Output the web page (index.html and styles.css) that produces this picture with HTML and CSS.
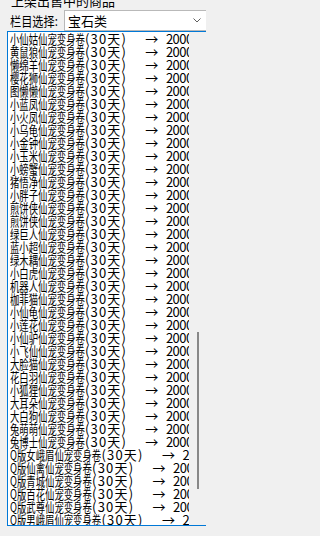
FILE: index.html
```html
<!DOCTYPE html>
<html lang="zh-CN">
<head>
<meta charset="utf-8">
<title>上架出售中的商品</title>
<link rel="stylesheet" href="styles.css">
</head>
<body>
<div class="page">
  <div class="title">上架出售中的商品</div>
  <div class="bar">
    <div class="label"><span class="label-text">栏目选择:</span></div>
    <div class="combo">
      <span class="combo-text">宝石类</span>
      <svg class="chev" width="8" height="5" viewBox="0 0 8 5"><path d="M0.5 0.5 L4 4 L7.5 0.5" fill="none" stroke="#606060" stroke-width="1"/></svg>
    </div>
  </div>
  <div class="list">
    <div class="items">
      <div class="row"><span>小仙姑仙宠变身卷</span><span class="sfx"><span class="dur">(30天)</span><span class="arw">→</span><span class="pts">2000</span></span></div>
      <div class="row"><span>黄鼠狼仙宠变身卷</span><span class="sfx"><span class="dur">(30天)</span><span class="arw">→</span><span class="pts">2000</span></span></div>
      <div class="row"><span>懒绵羊仙宠变身卷</span><span class="sfx"><span class="dur">(30天)</span><span class="arw">→</span><span class="pts">2000</span></span></div>
      <div class="row"><span>樱花狮仙宠变身卷</span><span class="sfx"><span class="dur">(30天)</span><span class="arw">→</span><span class="pts">2000</span></span></div>
      <div class="row"><span>图懒懒仙宠变身卷</span><span class="sfx"><span class="dur">(30天)</span><span class="arw">→</span><span class="pts">2000</span></span></div>
      <div class="row"><span>小蓝凤仙宠变身卷</span><span class="sfx"><span class="dur">(30天)</span><span class="arw">→</span><span class="pts">2000</span></span></div>
      <div class="row"><span>小火凤仙宠变身卷</span><span class="sfx"><span class="dur">(30天)</span><span class="arw">→</span><span class="pts">2000</span></span></div>
      <div class="row"><span>小乌龟仙宠变身卷</span><span class="sfx"><span class="dur">(30天)</span><span class="arw">→</span><span class="pts">2000</span></span></div>
      <div class="row"><span>小金钟仙宠变身卷</span><span class="sfx"><span class="dur">(30天)</span><span class="arw">→</span><span class="pts">2000</span></span></div>
      <div class="row"><span>小玉米仙宠变身卷</span><span class="sfx"><span class="dur">(30天)</span><span class="arw">→</span><span class="pts">2000</span></span></div>
      <div class="row"><span>小螃蟹仙宠变身卷</span><span class="sfx"><span class="dur">(30天)</span><span class="arw">→</span><span class="pts">2000</span></span></div>
      <div class="row"><span>猪悟净仙宠变身卷</span><span class="sfx"><span class="dur">(30天)</span><span class="arw">→</span><span class="pts">2000</span></span></div>
      <div class="row"><span>小胖子仙宠变身卷</span><span class="sfx"><span class="dur">(30天)</span><span class="arw">→</span><span class="pts">2000</span></span></div>
      <div class="row"><span>煎饼侠仙宠变身卷</span><span class="sfx"><span class="dur">(30天)</span><span class="arw">→</span><span class="pts">2000</span></span></div>
      <div class="row"><span>煎饼侠仙宠变身卷</span><span class="sfx"><span class="dur">(30天)</span><span class="arw">→</span><span class="pts">2000</span></span></div>
      <div class="row"><span>绿巨人仙宠变身卷</span><span class="sfx"><span class="dur">(30天)</span><span class="arw">→</span><span class="pts">2000</span></span></div>
      <div class="row"><span>蓝小超仙宠变身卷</span><span class="sfx"><span class="dur">(30天)</span><span class="arw">→</span><span class="pts">2000</span></span></div>
      <div class="row"><span>绿木耦仙宠变身卷</span><span class="sfx"><span class="dur">(30天)</span><span class="arw">→</span><span class="pts">2000</span></span></div>
      <div class="row"><span>小白虎仙宠变身卷</span><span class="sfx"><span class="dur">(30天)</span><span class="arw">→</span><span class="pts">2000</span></span></div>
      <div class="row"><span>机器人仙宠变身卷</span><span class="sfx"><span class="dur">(30天)</span><span class="arw">→</span><span class="pts">2000</span></span></div>
      <div class="row"><span>枷菲猫仙宠变身卷</span><span class="sfx"><span class="dur">(30天)</span><span class="arw">→</span><span class="pts">2000</span></span></div>
      <div class="row"><span>小仙龟仙宠变身卷</span><span class="sfx"><span class="dur">(30天)</span><span class="arw">→</span><span class="pts">2000</span></span></div>
      <div class="row"><span>小莲花仙宠变身卷</span><span class="sfx"><span class="dur">(30天)</span><span class="arw">→</span><span class="pts">2000</span></span></div>
      <div class="row"><span>小仙驴仙宠变身卷</span><span class="sfx"><span class="dur">(30天)</span><span class="arw">→</span><span class="pts">2000</span></span></div>
      <div class="row"><span>小飞仙仙宠变身卷</span><span class="sfx"><span class="dur">(30天)</span><span class="arw">→</span><span class="pts">2000</span></span></div>
      <div class="row"><span>大脸猫仙宠变身卷</span><span class="sfx"><span class="dur">(30天)</span><span class="arw">→</span><span class="pts">2000</span></span></div>
      <div class="row"><span>花白羽仙宠变身卷</span><span class="sfx"><span class="dur">(30天)</span><span class="arw">→</span><span class="pts">2000</span></span></div>
      <div class="row"><span>小狐狸仙宠变身卷</span><span class="sfx"><span class="dur">(30天)</span><span class="arw">→</span><span class="pts">2000</span></span></div>
      <div class="row"><span>大耳朵仙宠变身卷</span><span class="sfx"><span class="dur">(30天)</span><span class="arw">→</span><span class="pts">2000</span></span></div>
      <div class="row"><span>大白狗仙宠变身卷</span><span class="sfx"><span class="dur">(30天)</span><span class="arw">→</span><span class="pts">2000</span></span></div>
      <div class="row"><span>兔萌萌仙宠变身卷</span><span class="sfx"><span class="dur">(30天)</span><span class="arw">→</span><span class="pts">2000</span></span></div>
      <div class="row"><span>兔博士仙宠变身卷</span><span class="sfx"><span class="dur">(30天)</span><span class="arw">→</span><span class="pts">2000</span></span></div>
      <div class="row"><span>Q版女峨眉仙宠变身卷</span><span class="sfx"><span class="dur">(30天)</span><span class="arw">→</span><span class="pts">2000</span></span></div>
      <div class="row"><span>Q版仙禽仙宠变身卷</span><span class="sfx"><span class="dur">(30天)</span><span class="arw">→</span><span class="pts">2000</span></span></div>
      <div class="row"><span>Q版青城仙宠变身卷</span><span class="sfx"><span class="dur">(30天)</span><span class="arw">→</span><span class="pts">2000</span></span></div>
      <div class="row"><span>Q版百花仙宠变身卷</span><span class="sfx"><span class="dur">(30天)</span><span class="arw">→</span><span class="pts">2000</span></span></div>
      <div class="row"><span>Q版武尊仙宠变身卷</span><span class="sfx"><span class="dur">(30天)</span><span class="arw">→</span><span class="pts">2000</span></span></div>
      <div class="row"><span>Q版男峨眉仙宠变身卷</span><span class="sfx"><span class="dur">(30天)</span><span class="arw">→</span><span class="pts">2000</span></span></div>
    </div>
    <div class="sb"><div class="thumb"></div></div>
  </div>
</div>
</body>
</html>
```

FILE: styles.css
```css
html, body {
  margin: 0;
  padding: 0;
  background: #f0f0f0;
  overflow: hidden;
}
body {
  font-family: "Noto Sans CJK SC", "Noto Sans", sans-serif;
  font-size: 13px;
  color: #000;
}
.page {
  width: 206px;
  height: 536px;
  overflow: hidden;
}
.title {
  margin-top: -6px;
  height: 13px;
  line-height: 13px;
  padding-left: 11px;
  white-space: nowrap;
}
.bar {
  display: flex;
  align-items: center;
  height: 21px;
  margin-top: 3px;
  padding-left: 10px;
}
.label {
  width: 54px;
  flex: none;
  white-space: nowrap;
  line-height: 15px;
}
.label-text {
  display: inline-block;
  transform: scaleX(.86);
  transform-origin: 0 50%;
}
.combo {
  flex: 1;
  margin-right: -1px;
  height: 21px;
  box-sizing: border-box;
  border: 1px solid #b9b9b9;
  background: #fff;
  display: flex;
  align-items: center;
  justify-content: space-between;
  padding: 0 5px 0 3px;
  line-height: 15px;
}
.chev {
  display: block;
}
.list {
  margin-left: 7px;
  margin-right: -1px;
  height: 495px;
  box-sizing: border-box;
  border: 1px solid #0078d7;
  background: #fff;
  display: flex;
}
.items {
  flex: 1;
  min-width: 0;
  overflow: hidden;
  padding-left: 2px;
}
.row {
  height: 13px;
  line-height: 13px;
  white-space: nowrap;
  transform: scaleX(.72);
  transform-origin: 0 0;
}
.sfx {
  display: inline-block;
  transform: scaleX(1.3889);
  transform-origin: 0 0;
  white-space: nowrap;
}
.dur {
  display: inline-block;
  width: 46px;
  letter-spacing: 1.2px;
}
.arw {
  display: inline-block;
  width: 14px;
  margin-left: 14px;
  text-align: center;
}
.pts {
  display: inline-block;
  margin-left: 7px;
  letter-spacing: -.5px;
}
.sb {
  width: 17px;
  flex: none;
  background: #f0f0f0;
  box-sizing: border-box;
  padding: 300px 0 0 8px;
}
.thumb {
  width: 2px;
  height: 157px;
  background: #888;
}
```
